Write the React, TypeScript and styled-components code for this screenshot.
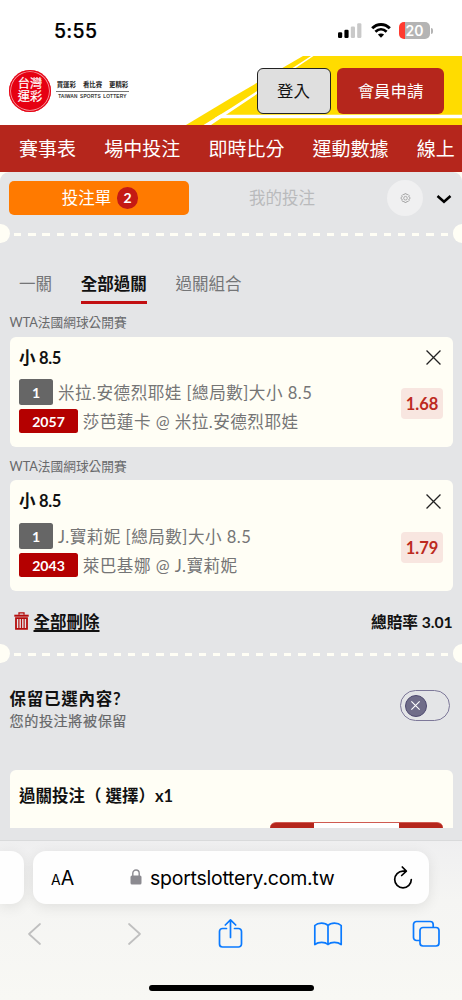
import React from "react";
import styled, { createGlobalStyle } from "styled-components";

const GlobalStyle = createGlobalStyle`
  *, *::before, *::after { box-sizing: border-box; }
  body { margin: 0; background: #fff; }
  button { font: inherit; color: inherit; border: 0; background: none; padding: 0; }
`;

const sysFont = `Inter, "Liberation Sans", sans-serif`;
const siteFont = `Lato, "Noto Sans CJK TC", sans-serif`;
const cream = "#fffef5";
const red = "#b5261c";

const Phone = styled.div`
  width: 462px;
  height: 1000px;
  overflow: hidden;
  display: flex;
  flex-direction: column;
  background: #fff;
  font-family: ${siteFont};
  color: #111;
  white-space: nowrap;
`;

const StatusBar = styled.div`
  height: 56px;
  flex: none;
  display: flex;
  align-items: flex-start;
  justify-content: space-between;
  padding: 19px 30px 0 54px;
  font-family: ${sysFont};
`;
const Clock = styled.span`
  font-size: 19.5px;
  line-height: 24px;
  font-weight: 500;
  letter-spacing: 0.3px;
  color: #000;
  -webkit-text-stroke: 0.2px #000;
`;
const StatusIcons = styled.div`
  display: flex;
  gap: 8.5px;
  padding-top: 3px;
`;
const Battery = styled.div`
  position: relative;
  width: 31px;
  height: 17px;
  border-radius: 5px;
  background: linear-gradient(90deg, #ff3b30 6px, #b4b4b4 6px);
  color: #fff;
  font-size: 14px;
  font-weight: 600;
  line-height: 17px;
  text-align: center;
  margin-right: 2px;
  &::after {
    content: "";
    position: absolute;
    right: -3px;
    top: 5.5px;
    width: 2px;
    height: 6px;
    border-radius: 0 2px 2px 0;
    background: #b4b4b4;
  }
`;

const Header = styled.header`
  position: relative;
  height: 69px;
  flex: none;
  display: flex;
  align-items: flex-start;
  padding: 12px 18px 0 9px;
`;
const HeaderArt = styled.svg`
  position: absolute;
  inset: 0;
`;
const Logo = styled.div`
  position: relative;
  display: flex;
  align-items: center;
  gap: 5px;
  margin-top: 1.5px;
  margin-right: auto;
`;
const Seal = styled.div`
  width: 42px;
  height: 42px;
  border-radius: 50%;
  background: #e60012;
  box-shadow: inset 0 0 0 1.2px #e60012, inset 0 0 0 2px #f6a5aa;
  color: #fff;
  font-size: 12.2px;
  line-height: 12.8px;
  -webkit-text-stroke: 0.2px #fff;
  display: flex;
  flex-direction: column;
  align-items: center;
  justify-content: center;
`;
const Slogan = styled.div`
  width: 73px;
  display: flex;
  flex-direction: column;
  align-items: center;
  color: #222;
`;
const SloganZh = styled.div`
  display: flex;
  gap: 7px;
  font-size: 6.4px;
  line-height: 10px;
  font-weight: 700;
  padding-bottom: 1px;
`;
const SloganEn = styled.div`
  width: 100%;
  border-top: 1px solid #777;
  padding-top: 1px;
  text-align: center;
  font-family: "Liberation Sans", sans-serif;
  font-size: 4.7px;
  line-height: 8px;
  font-weight: 400;
  -webkit-text-stroke: 0.15px #222;
  letter-spacing: 0.25px;
  word-spacing: 1px;
`;
const HeaderButton = styled.button<{ $primary?: boolean }>`
  position: relative;
  height: 45.5px;
  width: ${(p) => (p.$primary ? 107 : 74)}px;
  margin-left: ${(p) => (p.$primary ? 6.5 : 0)}px;
  border-radius: 6px;
  border: ${(p) => (p.$primary ? "0" : "1.3px solid #222")};
  background: ${(p) => (p.$primary ? red : "#dfdfdf")};
  color: ${(p) => (p.$primary ? "#fff" : "#111")};
  font-size: 16.4px;
  line-height: 24px;
`;

const Nav = styled.nav`
  height: 47px;
  flex: none;
  display: flex;
  align-items: center;
  gap: 28.2px;
  padding-left: 19px;
  background: ${red};
  color: #fff;
  font-size: 19px;
  line-height: 46px;
  overflow: hidden;
`;

const Page = styled.main`
  height: 669px;
  flex: none;
  overflow: hidden;
  background: ${cream};
  border-bottom: 1px solid #d9dadb;
`;
const Slip = styled.div`
  height: 100%;
  background: #e4e5e7;
  border-radius: 9px 9px 0 0;
  display: flex;
  flex-direction: column;
`;
const SlipTabs = styled.div`
  display: flex;
  align-items: center;
  height: 52px;
  flex: none;
  padding: 0 10px 0 9px;
`;
const SlipTab = styled.button<{ $active?: boolean }>`
  display: flex;
  align-items: center;
  justify-content: center;
  gap: 5.5px;
  width: ${(p) => (p.$active ? 180 : 186)}px;
  height: 34px;
  border-radius: 5px;
  padding-left: ${(p) => (p.$active ? 2 : 0)}px;
  background: ${(p) => (p.$active ? "#ff7a00" : "transparent")};
  color: ${(p) => (p.$active ? "#fff" : "#b9babc")};
  font-size: 16.5px;
  line-height: 34px;
`;
const Count = styled.span`
  width: 21.5px;
  height: 21.5px;
  border-radius: 50%;
  background: #c41a14;
  font-size: 14px;
  line-height: 21.5px;
  font-weight: 700;
`;
const GearButton = styled.button`
  display: grid;
  place-items: center;
  width: 36px;
  height: 36px;
  margin-left: 12px;
  border-radius: 50%;
  background: #f0f0f1;
`;
const Chevron = styled.svg`
  margin-left: auto;
  margin-top: 1px;
`;

const Perforation = styled.div`
  height: 19px;
  flex: none;
  display: flex;
  align-items: center;
  justify-content: space-between;
  &::before,
  &::after {
    content: "";
    width: 9.5px;
    height: 19px;
    background: ${cream};
    border-radius: 0 10px 10px 0;
  }
  &::after {
    border-radius: 10px 0 0 10px;
    width: 9px;
  }
`;
const Dashes = styled.div`
  width: 434px;
  height: 3px;
  margin-top: 2px;
  background: repeating-linear-gradient(90deg, ${cream} 0 7.3px, transparent 7.3px 14.22px);
`;

const ModeTabs = styled.div`
  display: flex;
  gap: 28.6px;
  height: 61px;
  padding: 27px 19px 0;
  flex: none;
`;
const ModeTab = styled.button<{ $active?: boolean }>`
  height: 33.5px;
  font-size: 16.55px;
  line-height: 28px;
  display: flex;
  color: ${(p) => (p.$active ? "#111" : "#747577")};
  font-weight: ${(p) => (p.$active ? 700 : 400)};
  border-bottom: 3.5px solid ${(p) => (p.$active ? "#c20f12" : "transparent")};
`;

const Bet = styled.section`
  height: 143.8px;
  flex: none;
  padding: 8px 9.5px 0;
`;
const League = styled.div`
  height: 24.7px;
  font-size: 12.7px;
  line-height: 21px;
  color: #68696b;
`;
const BetCard = styled.article`
  height: 110.6px;
  border-radius: 6px;
  background: ${cream};
  padding: 10px 9.5px 0;
`;
const BetHead = styled.div`
  display: flex;
  align-items: center;
  justify-content: space-between;
  height: 22px;
  padding-right: 2.5px;
  font-size: 16.5px;
  line-height: 20px;
  letter-spacing: -0.3px;
  font-weight: 700;
`;
const BetBody = styled.div`
  display: flex;
  align-items: flex-start;
  justify-content: space-between;
`;
const Lines = styled.div`
  padding-top: 10.3px;
  display: flex;
  flex-direction: column;
  gap: 3.6px;
`;
const Line = styled.div<{ $h: number }>`
  display: flex;
  align-items: center;
  gap: 4.7px;
  height: ${(p) => p.$h}px;
  font-size: 16.6px;
  line-height: 24px;
  letter-spacing: 0.47px;
  color: #757575;
  & > span:last-child { padding-top: 2px; }
`;
const Tag = styled.span<{ $red?: boolean }>`
  width: ${(p) => (p.$red ? 59 : 34.3)}px;
  height: 100%;
  display: grid;
  place-items: center;
  padding-top: 1px;
  border-radius: 2.5px;
  background: ${(p) => (p.$red ? "#b40000" : "#666")};
  color: #fff;
  font-size: 14.1px;
  font-weight: 700;
  letter-spacing: 0;
`;
const Odds = styled.div`
  width: 42px;
  height: 31px;
  margin-top: 19.5px;
  border-radius: 4px;
  background: #f8e6e0;
  color: #bd2a20;
  font-size: 16.5px;
  line-height: 32px;
  font-weight: 700;
  text-align: center;
`;

const Totals = styled.div`
  height: 52.5px;
  flex: none;
  display: flex;
  align-items: center;
  justify-content: space-between;
  padding: 7px 9.5px 0 13.5px;
  font-weight: 700;
  font-size: 16.5px;
`;
const DeleteAll = styled.button`
  display: flex;
  align-items: center;
  gap: 5px;
  font-weight: 700;
  text-decoration: underline;
  text-decoration-thickness: 1.5px;
  text-underline-offset: 1.5px;
`;
const Total = styled.span`
  font-size: 15.7px;
  letter-spacing: -0.05px;
`;

const Keep = styled.div`
  display: flex;
  justify-content: space-between;
  flex: none;
  height: 106.5px;
  padding: 25px 12px 0 9.5px;
`;
const KeepTitle = styled.div`
  font-size: 16.5px;
  line-height: 23px;
  letter-spacing: 0.75px;
  font-weight: 700;
`;
const KeepNote = styled.div`
  font-size: 14.1px;
  line-height: 19px;
  letter-spacing: 0.6px;
  color: #666769;
  -webkit-text-stroke: 0.2px #666769;
`;
const Toggle = styled.button`
  width: 50px;
  height: 31px;
  margin-top: 2px;
  border: 1.2px solid #7d7899;
  border-radius: 16px;
  padding-left: 3.5px;
  display: flex;
  align-items: center;
`;
const Knob = styled.span`
  width: 22px;
  height: 22px;
  border-radius: 50%;
  border: 1.2px solid #4f4a70;
  background: #706d89;
  display: grid;
  place-items: center;
`;

const ParlayCard = styled.article`
  height: 58.3px;
  flex: none;
  margin: 0 9.5px;
  border-radius: 6px 6px 0 0;
  background: ${cream};
  overflow: hidden;
  padding: 12px 9.5px 0;
  display: flex;
  flex-direction: column;
`;
const ParlayTitle = styled.div`
  height: 40px;
  flex: none;
  display: flex;
  font-size: 16.5px;
  line-height: 28px;
  font-weight: 700;
`;
const Stepper = styled.div`
  align-self: flex-end;
  width: 173px;
  height: 32px;
  flex: none;
  border-radius: 6px;
  border-top: 1px solid #cf5a51;
  background: linear-gradient(90deg, ${red} 44px, #fff 44px 129px, ${red} 129px);
`;

const Browser = styled.footer`
  flex: 1;
  display: flex;
  flex-direction: column;
  align-items: center;
  background: linear-gradient(#efeff0, #f5f5f3 60px, #f8f8f4);
  font-family: ${sysFont};
`;
const AddressRow = styled.div`
  align-self: stretch;
  display: flex;
  gap: 9.5px;
  padding-top: 9.5px;
`;
const PrevPage = styled.div`
  width: 23.5px;
  height: 53.5px;
  border-radius: 0 13px 13px 0;
  background: #fefefe;
  box-shadow: 0 3px 14px rgba(0, 0, 0, 0.09);
`;
const AddressBar = styled.div`
  width: 396px;
  height: 53.5px;
  border-radius: 13px;
  background: #fefefe;
  box-shadow: 0 3px 14px rgba(0, 0, 0, 0.09);
  display: flex;
  align-items: center;
  padding: 0 16px 0 18px;
  color: #000;
`;
const TextSize = styled.span`
  font-size: 19.5px;
  width: 79px;
  padding-top: 1px;
  small { font-size: 14px; }
`;
const Url = styled.span`
  flex: 1;
  padding-left: 8px;
  padding-top: 1px;
  font-size: 19.5px;
  letter-spacing: -0.25px;
`;
const Toolbar = styled.div`
  align-self: stretch;
  display: flex;
  justify-content: space-between;
  align-items: center;
  height: 60px;
  padding: 0 21px 0 19.5px;
`;
const HomeBar = styled.div`
  width: 165px;
  height: 6px;
  border-radius: 3px;
  margin-top: 20.5px;
  background: #000;
`;

const navItems = ["賽事表", "場中投注", "即時比分", "運動數據", "線上"];

const bets = [
  { pick: "小 8.5", no: "1", market: "米拉.安德烈耶娃 [總局數]大小 8.5", id: "2057", match: "莎芭蓮卡 @ 米拉.安德烈耶娃", odds: "1.68" },
  { pick: "小 8.5", no: "1", market: "J.寶莉妮 [總局數]大小 8.5", id: "2043", match: "萊巴基娜 @ J.寶莉妮", odds: "1.79" },
];

const Cross = ({ size, color, width }: { size: number; color: string; width: number }) => (
  <svg width={size} height={size} viewBox="0 0 14 14">
    <path d="M.5 .5 13.5 13.5M13.5 .5 .5 13.5" stroke={color} strokeWidth={width} />
  </svg>
);

const Divider = () => (
  <Perforation>
    <Dashes />
  </Perforation>
);

export default function App() {
  return (
    <Phone>
      <GlobalStyle />
      <StatusBar>
        <Clock>5:55</Clock>
        <StatusIcons>
          <svg width="24" height="17" viewBox="0 0 24 17">
            <rect x="0" y="10.2" width="4.2" height="5.8" rx="1.2" fill="#000" />
            <rect x="6.4" y="7.8" width="4.2" height="8.2" rx="1.2" fill="#000" />
            <rect x="12.8" y="4.5" width="4.2" height="11.5" rx="1.2" fill="#c9c9c9" />
            <rect x="19.2" y="1.2" width="4.2" height="14.8" rx="1.2" fill="#c9c9c9" />
          </svg>
          <svg width="20" height="17" viewBox="0 0 20 17">
            <path d="M1.2 6.3C6.2 1.2 13.8 1.2 18.8 6.3" fill="none" stroke="#000" strokeWidth="2.9" />
            <path d="M4.4 9.7c3.4-3.2 7.8-3.2 11.2 0" fill="none" stroke="#000" strokeWidth="2.7" />
            <path d="M10 15.8 6.9 12.6c1.8-1.6 4.4-1.6 6.2 0z" fill="#000" />
          </svg>
          <Battery>20</Battery>
        </StatusIcons>
      </StatusBar>

      <Header>
        <HeaderArt width="462" height="69" viewBox="0 0 462 69">
          <path d="M303 0H462V69H186L231 42z" fill="#ffdc00" />
          <path d="M311 0h2.500L231 55.500 211 69h-7.500L231 52z" fill="#fff" />
          <path d="M220 58.800H462v3.400H214.500z" fill="#fff" />
        </HeaderArt>
        <Logo>
          <Seal>
            <span>台灣</span>
            <span>運彩</span>
          </Seal>
          <Slogan>
            <SloganZh>
              <span>買運彩</span>
              <span>看比賽</span>
              <span>更精彩</span>
            </SloganZh>
            <SloganEn>TAIWAN SPORTS LOTTERY</SloganEn>
          </Slogan>
        </Logo>
        <HeaderButton>登入</HeaderButton>
        <HeaderButton $primary>會員申請</HeaderButton>
      </Header>

      <Nav>
        {navItems.map((item) => (
          <span key={item}>{item}</span>
        ))}
      </Nav>

      <Page>
        <Slip>
          <SlipTabs>
            <SlipTab $active>
              投注單<Count>2</Count>
            </SlipTab>
            <SlipTab>我的投注</SlipTab>
            <GearButton>
              <svg width="11" height="11" viewBox="0 0 11 11" fill="none" stroke="#a3a3a3" strokeWidth=".9">
                <path d="M4.700.7h1.600l.5 1.100 1.200-.4 1.100 1.100-.4 1.200 1.200.6v1.600l-1.200.5.4 1.200-1.100 1.100-1.200-.4-.5 1.200H4.700l-.5-1.200-1.200.4-1.100-1.100.4-1.200-1.200-.5V4.300l1.200-.6-.4-1.200L3 1.400l1.200.4z" />
                <circle cx="5.500" cy="5.200" r="1.800" />
              </svg>
            </GearButton>
            <Chevron width="16" height="10" viewBox="0 0 16 10">
              <path d="M1.500 2 8 7.800 14.500 2" fill="none" stroke="#000" strokeWidth="2.500" />
            </Chevron>
          </SlipTabs>
          <Divider />
          <ModeTabs>
            <ModeTab>一關</ModeTab>
            <ModeTab $active>全部過關</ModeTab>
            <ModeTab>過關組合</ModeTab>
          </ModeTabs>

          {bets.map((bet) => (
            <Bet key={bet.id}>
              <League>WTA法國網球公開賽</League>
              <BetCard>
                <BetHead>
                  <span>{bet.pick}</span>
                  <Cross size={15} color="#222" width={1.2} />
                </BetHead>
                <BetBody>
                  <Lines>
                    <Line $h={26.5}>
                      <Tag>{bet.no}</Tag>
                      <span>{bet.market}</span>
                    </Line>
                    <Line $h={23.7}>
                      <Tag $red>{bet.id}</Tag>
                      <span>{bet.match}</span>
                    </Line>
                  </Lines>
                  <Odds>{bet.odds}</Odds>
                </BetBody>
              </BetCard>
            </Bet>
          ))}

          <Totals>
            <DeleteAll>
              <svg width="15" height="18" viewBox="0 0 15 18" fill="none" stroke="#b40c0c">
                <path d="M.3 3.700h14.400" strokeWidth="2" />
                <path d="M5 2.800V.9h5v1.900" strokeWidth="1.300" />
                <path d="M2 6.200h11v10.600H2z" strokeWidth="1.800" />
                <path d="M4.900 7v9M7.500 7v9M10.100 7v9" strokeWidth="1.200" />
              </svg>
              全部刪除
            </DeleteAll>
            <Total>總賠率 3.01</Total>
          </Totals>
          <Divider />

          <Keep>
            <div>
              <KeepTitle>保留已選內容?</KeepTitle>
              <KeepNote>您的投注將被保留</KeepNote>
            </div>
            <Toggle>
              <Knob>
                <Cross size={9} color="#fff" width={1.7} />
              </Knob>
            </Toggle>
          </Keep>

          <ParlayCard>
            <ParlayTitle>過關投注（ 選擇）x1</ParlayTitle>
            <Stepper />
          </ParlayCard>
        </Slip>
      </Page>

      <Browser>
        <AddressRow>
          <PrevPage />
          <AddressBar>
            <TextSize>
              <small>A</small>A
            </TextSize>
            <svg width="12" height="16" viewBox="0 0 12 16">
              <rect x=".5" y="6.500" width="11" height="9" rx="1.500" fill="#8b8a90" />
              <path d="M2.800 7V4.200a3.200 3.200 0 0 1 6.400 0V7" fill="none" stroke="#8b8a90" strokeWidth="1.400" />
            </svg>
            <Url>sportslottery.com.tw</Url>
            <svg width="20" height="23" viewBox="0 0 20 23" fill="none" stroke="#000" strokeWidth="1.700" strokeLinecap="round" strokeLinejoin="round">
              <path d="M13.200 5.200H10A8.300 8.300 0 1 0 18.300 13.500M9.300 1l4 4.200-4.600 4.300" />
            </svg>
          </AddressBar>
        </AddressRow>
        <Toolbar>
          <svg width="30" height="30" viewBox="0 0 30 30" fill="none" stroke="#bfbfbf" strokeWidth="1.700" strokeLinecap="round" strokeLinejoin="round">
            <path d="M20 5 9 15l11 10" />
          </svg>
          <svg width="30" height="30" viewBox="0 0 30 30" fill="none" stroke="#bfbfbf" strokeWidth="1.700" strokeLinecap="round" strokeLinejoin="round">
            <path d="M12 5l11 10-11 10" />
          </svg>
          <svg width="30" height="32" viewBox="0 0 30 32" fill="none" stroke="#0a7aff" strokeWidth="1.700" strokeLinecap="round" strokeLinejoin="round">
            <path d="M11.500 10.500H7.500a3 3 0 0 0-3 3v12.500a3 3 0 0 0 3 3h16a3 3 0 0 0 3-3V13.500a3 3 0 0 0-3-3h-4M15.500 19.500V2M10.300 7 15.500 1.800 20.700 7" />
          </svg>
          <svg width="30" height="30" viewBox="0 0 30 30" fill="none" stroke="#0a7aff" strokeWidth="1.700" strokeLinecap="round" strokeLinejoin="round">
            <path d="M15 25.500C12 22.700 5.500 22.700 1.800 25.500V6.500C5 3.200 12 3.200 15 6.500zM15 25.500c3-2.800 9.500-2.800 13.200 0V6.500C25 3.200 18 3.200 15 6.500z" />
          </svg>
          <svg width="30" height="30" viewBox="0 0 30 30" fill="none" stroke="#0a7aff" strokeWidth="1.700" strokeLinejoin="round">
            <rect x="9" y="8.500" width="19" height="18.500" rx="3" />
            <path d="M9 21.500H5.500a3 3 0 0 1-3-3V5.500a3 3 0 0 1 3-3h13.700a3 3 0 0 1 3 3v3" />
          </svg>
        </Toolbar>
        <HomeBar />
      </Browser>
    </Phone>
  );
}
